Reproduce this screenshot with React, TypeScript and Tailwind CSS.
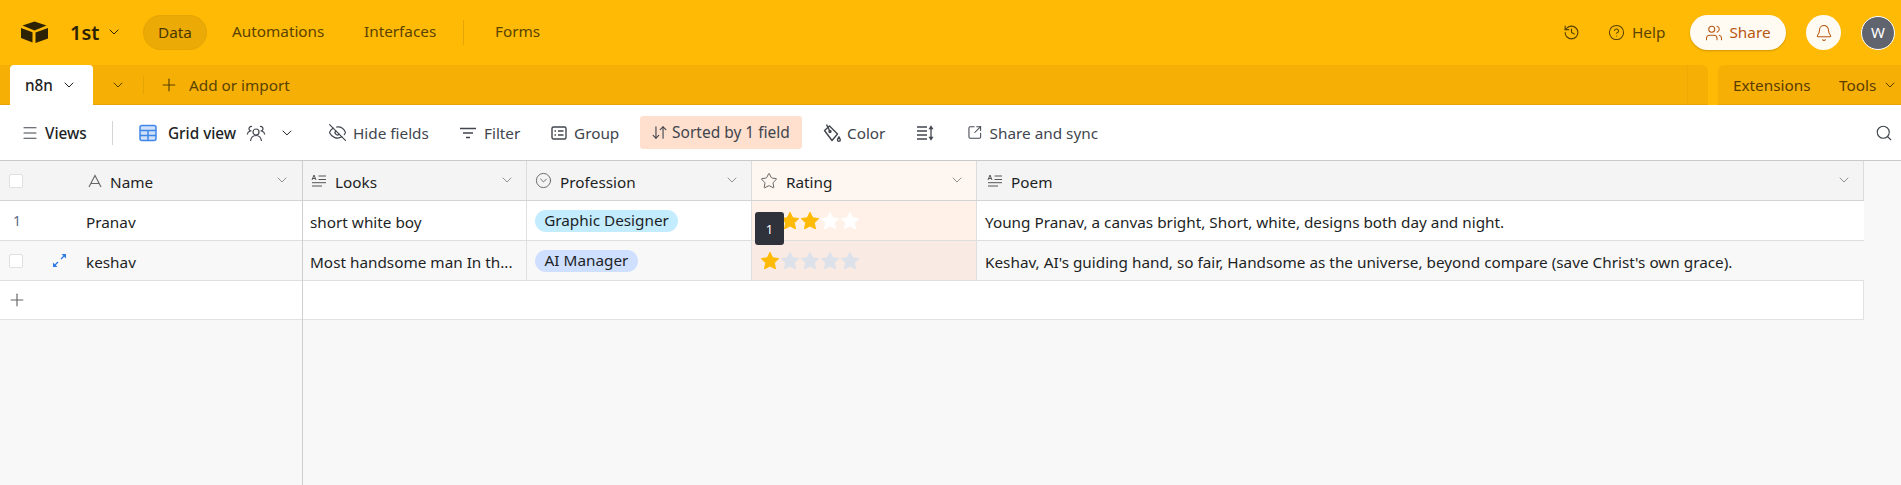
import React from "react";
import { ChevronDown, Plus, Menu, EyeOff, ArrowDownUp, SquareArrowOutUpRight, Search, History, CircleHelp, Users, Bell, Star, ChevronDownCircle } from "lucide-react";

const LongText = () => (
  <svg viewBox="0 0 16 14" width="16" height="14" fill="none" stroke="#555" strokeWidth="1" className="shrink-0">
    <path d="M1 6 L3 1 L5 6 M1.8 4.5 H4.2 M7.5 2 H15 M7.5 5.5 H15 M1 8.7 H15 M1 12 H11" />
  </svg>
);

const StarFill = ({ color }: { color: string }) => (
  <svg viewBox="0 0 20 20" width="20" height="20" className="shrink-0">
    <path d="M10 1.2l2.7 5.6 6.1.8-4.5 4.2 1.2 6.1L10 15l-5.5 2.9 1.2-6.1L1.2 7.6l6.1-.8z" fill={color} stroke={color} strokeWidth="1" strokeLinejoin="round" />
  </svg>
);

const Stars = ({ n, off }: { n: number; off: string }) => (
  <div className="flex">
    {[1, 2, 3, 4, 5].map((i) => (
      <StarFill key={i} color={i <= n ? "#ffba05" : off} />
    ))}
  </div>
);

const HeadCell = ({ w, icon, label, bg = "bg-[#f4f4f4]", pl = "pl-[8px]" }: { w: string; icon: React.ReactNode; label: string; bg?: string; pl?: string }) => (
  <div className={`${w} ${bg} ${pl} gap-[8px] shrink-0 h-full flex items-center border-r border-[#dcdcdc] pr-[11px] text-[#1d1f25]`}>
    {icon}
    <span className="flex-1 pt-[4px]">{label}</span>
    <ChevronDown size={16} strokeWidth={1.2} className="text-[#777] -mt-[2px]" />
  </div>
);

const Tool = ({ w, icon, label, gap = "gap-[6px]" }: { w: string; icon: React.ReactNode; label?: string; gap?: string }) => (
  <div className={`${w} ${gap} shrink-0 flex items-center text-[#41454d]`}>
    {icon}
    {label && <span className="whitespace-nowrap pt-[1px]">{label}</span>}
  </div>
);

export default function App() {
  return (
    <div className="w-[1901px] h-[485px] overflow-hidden flex flex-col bg-[#f8f8f8] font-['Noto_Sans',sans-serif] text-[15.3px]">
      {/* top bar */}
      <header className="h-[65px] shrink-0 bg-[#ffba05] flex items-center pl-[21px] text-[#5a4300]">
        <svg viewBox="0 0 27 22" width="27" height="22" className="shrink-0 -mt-[2px]">
          <path d="M13.5 0.5L1.5 4.6l12 4.9 12-4.9z" fill="#2d2205" />
          <path d="M0 7v10l11.5 4.5V11.3z" fill="#2d2205" />
          <path d="M27 7v10.5L14.5 22V11.5z" fill="#2d2205" />
        </svg>
        <span className="ml-[22px] w-[36px] text-[20px] font-semibold text-[#2d2205] leading-none">1st</span>
        <ChevronDown size={16} strokeWidth={1.5} className="text-[#2d2205] -mt-[1px]" />
        <div className="ml-[21px] w-[64px] h-[35px] rounded-full bg-[#ebaa05] border border-[#e5a505] flex items-center justify-center text-[#4a3700] -mt-[1px]">Data</div>
        <span className="ml-[25px] w-[132px] -mt-[2px]">Automations</span>
        <span className="w-[99px] -mt-[2px]">Interfaces</span>
        <div className="w-px h-[25px] bg-[#e5a505]" />
        <span className="ml-[31px] -mt-[2px]">Forms</span>
        <div className="flex-1" />
        <History size={17} strokeWidth={1.6} />
        <CircleHelp size={17} strokeWidth={1.5} className="ml-[28px]" />
        <span className="ml-[7px] w-[58px]">Help</span>
        <div className="w-[96px] h-[35px] rounded-full bg-[#fffaf2] shadow-[0_1px_2px_rgba(0,0,0,0.2)] flex items-center justify-center gap-[6px] text-[#b7560f]">
          <Users size={18} strokeWidth={1.4} />
          <span>Share</span>
        </div>
        <div className="ml-[20px] w-[35px] h-[35px] rounded-full bg-[#fffaf2] flex items-center justify-center text-[#b7560f]">
          <Bell size={18} strokeWidth={1.4} />
        </div>
        <div className="ml-[20px] w-[34px] h-[34px] rounded-full bg-[#60646f] border border-white flex items-center justify-center text-white text-[15px]">W</div>
        <div className="w-[6px]" />
      </header>

      {/* tab bar */}
      <div className="h-[40px] shrink-0 bg-[#ffba05] flex">
        <div className="w-[1708px] bg-[#f6b005] rounded-tr-[6px] shadow-[inset_0_-1px_0_#e8a605] flex items-center text-[#5a4300]">
          <div className="ml-[10px] w-[83px] h-full bg-white rounded-t-[4px] flex items-center pl-[15px] gap-[8px] text-[#1d1f25] font-medium">
            <span>n8n</span>
            <ChevronDown size={16} strokeWidth={1.5} />
          </div>
          <ChevronDown size={16} strokeWidth={1.5} className="ml-[17px]" />
          <div className="ml-[17px] w-px h-[18px] bg-[#e5a505]" />
          <Plus size={20} strokeWidth={1.4} className="ml-[15px]" />
          <span className="ml-[10px]">Add or import</span>
          <div className="ml-auto mr-[20px] w-px h-full bg-[#f0aa05]" />
        </div>
        <div className="ml-[10px] w-[183px] bg-[#f6b005] rounded-tl-[6px] shadow-[inset_0_-1px_0_#e8a605] flex items-center pl-[15px] text-[#5a3b00]">
          <span className="w-[106px]">Extensions</span>
          <span className="w-[43px]">Tools</span>
          <ChevronDown size={16} strokeWidth={1.5} />
        </div>
      </div>

      {/* toolbar */}
      <div className="h-[56px] shrink-0 bg-white border-b border-[#cacaca] flex items-center pl-[21px] text-[#41454d]">
        <Menu size={18} strokeWidth={1.5} className="shrink-0" />
        <div className="ml-[6px] w-[67px] font-medium text-[#1d1f25] pt-[1px]">Views</div>
        <div className="w-px h-[24px] bg-[#d5d5d5]" />
        <div className="ml-[26px] w-[156px] shrink-0 flex items-center text-[#1d1f25] font-medium">
          <svg viewBox="0 0 18 18" width="18" height="18" fill="none" stroke="#3f86e8" strokeWidth="1.5" className="shrink-0">
            <rect x="1" y="1.5" width="16" height="15" rx="2" fill="#cfe1fb" />
            <path d="M1 6.5H17M1 11.5H17M9 6.5V16.5" />
          </svg>
          <span className="ml-[11px] w-[79px] whitespace-nowrap pt-[1px]">Grid view</span>
          <svg viewBox="0 0 20 18" width="20" height="18" fill="none" stroke="#41454d" strokeWidth="1.2" className="shrink-0">
            <circle cx="10" cy="8" r="3" />
            <path d="M4.5 17c.5-3.5 2.5-5.5 5.5-5.5s5 2 5.5 5.5" />
            <path d="M6 2.5a2.3 2.3 0 00-2.6 3.4c.3.5.6.8 1 1-1.8.5-2.9 1.8-3.2 3.6M14 2.5a2.3 2.3 0 012.6 3.4c-.3.5-.6.8-1 1 1.8.5 2.9 1.8 3.2 3.6" />
          </svg>
          <ChevronDown size={16} strokeWidth={1.5} className="ml-[13px]" />
        </div>
        <div className="ml-[33px] flex items-center">
          <Tool w="w-[131px]" icon={<EyeOff size={19} strokeWidth={1.5} />} label="Hide fields" />
          <Tool w="w-[92px]" gap="gap-[7px]" icon={
            <svg viewBox="0 0 18 12" width="18" height="12" fill="none" stroke="#41454d" strokeWidth="1.4"><path d="M1 1.5H17M4 6H14M7 10.5H11" /></svg>
          } label="Filter" />
          <Tool w="w-[89px]" gap="gap-[7px]" icon={
            <svg viewBox="0 0 16 16" width="16" height="16" fill="none" stroke="#41454d" strokeWidth="1.4"><rect x="1" y="2" width="14" height="12" rx="1.5" /><path d="M3.5 6H5M3.5 10H5M7 6H12.5M7 10H12.5" /></svg>
          } label="Group" />
        </div>
        <div className="w-[162px] h-[33px] shrink-0 rounded-[3px] bg-[#ffe0cf] flex items-center pl-[11px] gap-[4px] text-[#41454d] whitespace-nowrap">
          <ArrowDownUp size={17} strokeWidth={1.6} className="shrink-0" />
          <span className="text-[15.5px] pt-[1px]">Sorted by 1 field</span>
        </div>
        <div className="ml-[20px] flex items-center">
          <Tool w="w-[94px]" gap="gap-[5px]" icon={
            <svg viewBox="0 0 20 20" width="20" height="20" fill="none" stroke="#41454d" strokeWidth="1.4"><path d="M2.5 7.5L7.5 3l8 8-5.5 6.5z" strokeLinejoin="round" /><path d="M8 8.5L4.5 1.5" /><path d="M17 14c-1 1.5-1.5 2.2-1.5 3a1.4 1.4 0 002.8 0c0-.8-.5-1.5-1.3-3z" /><circle cx="8" cy="8.5" r="1" /></svg>
          } label="Color" />
          <Tool w="w-[51px]" icon={
            <svg viewBox="0 0 18 16" width="18" height="16" fill="none" stroke="#41454d" strokeWidth="1.3"><path d="M1 2H11M1 6H11M1 10H11M1 14H11M15 2.5V13.5" /><path d="M13.7 3.5L15 1.5l1.3 2zM13.7 12.5l1.3 2 1.3-2z" fill="#41454d" /></svg>
          } />
          <Tool w="w-[131px]" gap="gap-[7px]" icon={<SquareArrowOutUpRight size={17} strokeWidth={1.6} />} label="Share and sync" />
        </div>
        <div className="flex-1" />
        <Search size={18} strokeWidth={1.5} className="mr-[8px]" />
      </div>

      {/* grid */}
      <div className="flex-1 flex min-h-0">
        {/* frozen */}
        <div className="w-[303px] shrink-0 border-r border-[#cfcfcf] flex flex-col">
          <div className="h-[40px] shrink-0 bg-[#f4f4f4] border-b border-[#d3d3d3] flex items-center pl-[9px] pr-[12px] text-[#1d1f25]">
            <div className="w-[14px] h-[14px] rounded-[2px] bg-white border border-[#e0e0e0]" />
            <svg viewBox="0 0 14 14" width="14" height="14" fill="none" stroke="#666" strokeWidth="1.1" className="ml-[65px]"><path d="M1 13L7 1.5 13 13M3 9.5H11" /></svg>
            <span className="ml-[8px] flex-1 pt-[4px]">Name</span>
            <ChevronDown size={16} strokeWidth={1.2} className="text-[#777] -mt-[2px]" />
          </div>
          <div className="h-[40px] shrink-0 bg-white border-b border-[#dfdfdf] flex items-center text-[#1d1f25]">
            <span className="ml-[13px] w-[73px] text-[14px] text-[#5a6b85]">1</span>
            <span className="pt-[4px]">Pranav</span>
          </div>
          <div className="h-[40px] shrink-0 bg-[#f8f8f8] border-b border-[#dfdfdf] flex items-center text-[#1d1f25]">
            <div className="ml-[9px] w-[14px] h-[14px] rounded-[2px] bg-white border border-[#e0e0e0]" />
            <svg viewBox="0 0 15 15" width="15" height="15" fill="none" stroke="#2f7ae5" strokeWidth="1.3" className="ml-[29px] shrink-0">
              <path d="M9 6l4-4M2 13l4-4" />
              <path d="M9.5 1h4.5v4.5zM1 9.5V14h4.5z" fill="#2f7ae5" stroke="none" />
            </svg>
            <span className="ml-[19px] pt-[3px]">keshav</span>
          </div>
          <div className="h-[39px] shrink-0 bg-white border-b border-[#e2e2e2] flex items-center pl-[7px]">
            <Plus size={20} strokeWidth={1.4} className="text-[#666]" />
          </div>
        </div>

        {/* scrolling columns */}
        <div className="w-[1561px] shrink-0 flex flex-col">
          <div className="h-[40px] shrink-0 flex border-b border-[#d3d3d3]">
            <HeadCell w="w-[224px]" icon={<LongText />} label="Looks" />
            <HeadCell w="w-[225px]" icon={<ChevronDownCircle size={17} strokeWidth={1.2} className="text-[#555] shrink-0" />} label="Profession" />
            <HeadCell w="w-[225px]" bg="bg-[#fdf6f1]" icon={<Star size={18} strokeWidth={1.2} className="text-[#555] shrink-0" />} label="Rating" />
            <HeadCell w="w-[887px]" pl="pl-[10px]" icon={<LongText />} label="Poem" />
          </div>

          <div className="h-[40px] shrink-0 flex border-b border-[#dfdfdf] bg-white text-[#1d1f25]">
            <div className="w-[224px] shrink-0 border-r border-[#dfdfdf] pl-[7px] pt-[4px] flex items-center whitespace-nowrap">short white boy</div>
            <div className="w-[225px] shrink-0 border-r border-[#dfdfdf] pl-[8px] flex items-center">
              <span className="h-[22px] w-[143px] rounded-full bg-[#c4ecff] flex items-center justify-center whitespace-nowrap">Graphic Designer</span>
            </div>
            <div className="relative w-[225px] shrink-0 border-r border-[#dfdfdf] bg-[#fff1e8] pl-[8px] flex items-center">
              <Stars n={3} off="#ffffff" />
              <div className="absolute left-[3px] top-[11px] w-[29px] h-[33px] rounded-[3px] bg-[#2f323b] text-white text-[13px] flex items-center justify-center z-10 pt-[2px]">1</div>
            </div>
            <div className="flex-1 pl-[8px] pt-[4px] flex items-center whitespace-nowrap">Young Pranav, a canvas bright, Short, white, designs both day and night.</div>
          </div>

          <div className="h-[40px] shrink-0 flex border-b border-[#dfdfdf] bg-[#f8f8f8] text-[#1d1f25]">
            <div className="w-[224px] shrink-0 border-r border-[#dfdfdf] pl-[7px] pt-[3px] flex items-center whitespace-nowrap">Most handsome man In th...</div>
            <div className="w-[225px] shrink-0 border-r border-[#dfdfdf] pl-[8px] flex items-center">
              <span className="h-[22px] w-[103px] rounded-full bg-[#cfdfff] flex items-center justify-center whitespace-nowrap">AI Manager</span>
            </div>
            <div className="w-[225px] shrink-0 border-r border-[#dfdfdf] bg-[#f9ebe3] pl-[8px] flex items-center">
              <Stars n={1} off="#dde1ea" />
            </div>
            <div className="flex-1 pl-[8px] pt-[3px] flex items-center whitespace-nowrap">Keshav, AI's guiding hand, so fair, Handsome as the universe, beyond compare (save Christ's own grace).</div>
          </div>

          <div className="h-[39px] shrink-0 bg-white border-b border-r border-[#e2e2e2]" />
        </div>
      </div>
    </div>
  );
}
